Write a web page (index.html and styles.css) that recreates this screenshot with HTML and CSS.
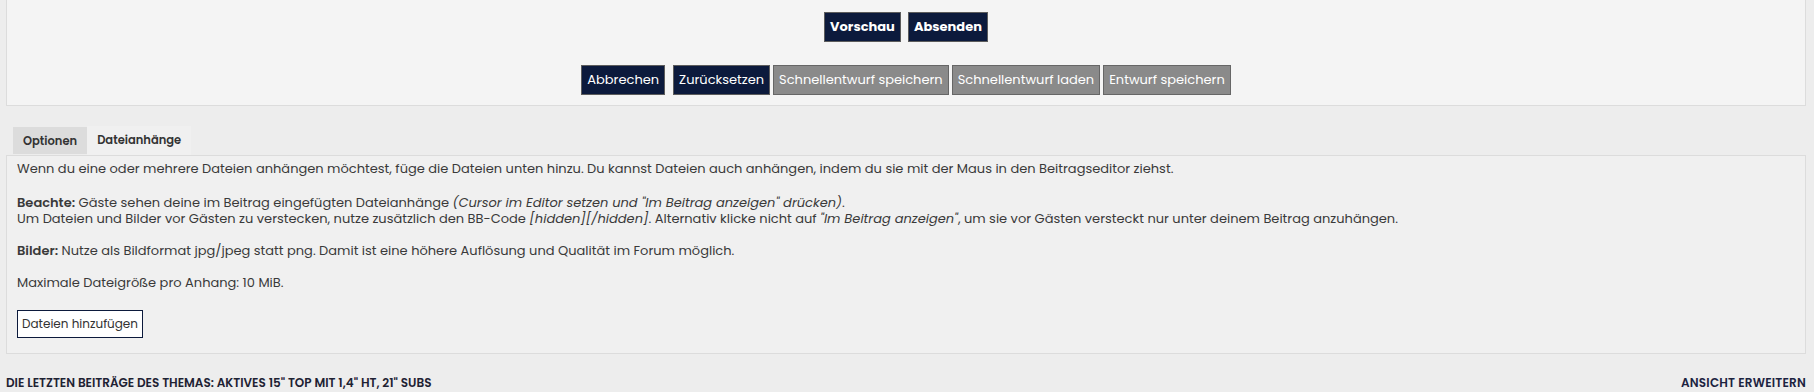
FILE: index.html
```html
<!DOCTYPE html>
<html lang="de">
<head>
    <meta charset="UTF-8">
    <title>Beitrag schreiben</title>
    <link rel="stylesheet" href="styles.css">
</head>
<body>
    <div class="wrap">
        <div class="submit-panel">
            <div class="button-row">
                <button class="btn btn-dark btn-bold">Vorschau</button>
                <button class="btn btn-dark btn-bold">Absenden</button>
            </div>
            <div class="button-row">
                <button class="btn btn-dark spaced">Abbrechen</button>
                <button class="btn btn-dark">Zurücksetzen</button>
                <button class="btn btn-gray">Schnellentwurf speichern</button>
                <button class="btn btn-gray">Schnellentwurf laden</button>
                <button class="btn btn-gray">Entwurf speichern</button>
            </div>
        </div>

        <ul class="tabs">
            <li class="tab">Optionen</li>
            <li class="tab active">Dateianhänge</li>
        </ul>
        <div class="tab-box">
            <p class="intro">Wenn du eine oder mehrere Dateien anhängen möchtest, füge die Dateien unten hinzu. Du kannst Dateien auch anhängen, indem du sie mit der Maus in den Beitragseditor ziehst.</p>
            <p><strong>Beachte:</strong> Gäste sehen deine im Beitrag eingefügten Dateianhänge <em>(Cursor im Editor setzen und "Im Beitrag anzeigen" drücken)</em>.<br>
            Um Dateien und Bilder vor Gästen zu verstecken, nutze zusätzlich den BB-Code <em>[hidden][/hidden]</em>. Alternativ klicke nicht auf <em>"Im Beitrag anzeigen"</em>, um sie vor Gästen versteckt nur unter deinem Beitrag anzuhängen.</p>
            <p><strong>Bilder:</strong> Nutze als Bildformat jpg/jpeg statt png. Damit ist eine höhere Auflösung und Qualität im Forum möglich.</p>
            <p>Maximale Dateigröße pro Anhang: 10 MiB.</p>
            <button class="btn-add">Dateien hinzufügen</button>
        </div>

        <div class="topic-bar">
            <h3>Die letzten Beiträge des Themas: Aktives 15" TOP mit 1,4" HT, 21" Subs</h3>
            <a href="#" class="expand">Ansicht erweitern</a>
        </div>
    </div>
</body>
</html>
```

FILE: styles.css
```css
body {
    margin: 0;
    background: #ededed;
    color: #3a3a3a;
    font-family: Poppins, "Open Sans", sans-serif;
    font-size: 13px;
}

.wrap {
    width: 1800px;
    margin-left: 6px;
}

.submit-panel {
    background: #f4f4f4;
    border: 1px solid #dcdcdc;
    border-top: none;
    padding: 12px 0 10px;
    display: flex;
    flex-direction: column;
    align-items: center;
    gap: 23px;
}

.button-row {
    display: flex;
    gap: 3px;
}

.button-row:first-child {
    gap: 7px;
}

.btn {
    height: 30px;
    padding: 0 5px;
    border: 1px solid #5c5c5c;
    color: #fff;
    font-family: inherit;
    font-size: 13px;
    cursor: pointer;
}

.btn-dark {
    background: #0c1a3c;
}

.btn-gray {
    background: #8a8a8a;
    border-color: #666;
}

.btn-bold {
    font-weight: 700;
}

.spaced {
    margin-right: 5px;
}

.tabs {
    list-style: none;
    margin: 20px 0 0 7px;
    padding: 0;
    display: flex;
    align-items: flex-end;
}

.tab {
    height: 27px;
    line-height: 28px;
    margin-bottom: 1px;
    padding: 0 10px;
    background: #dcdcdc;
    font-size: 11.5px;
    font-weight: 600;
    color: #333;
}

.tab.active {
    background: #f0f0f0;
    height: 29px;
    line-height: 28px;
    margin-bottom: 0;
}

.tab-box {
    background: #f0f0f0;
    border: 1px solid #dcdcdc;
    padding: 5px 10px 15px;
}

.tab-box p {
    margin: 0 0 16px;
    line-height: 16px;
}

.tab-box p.intro {
    margin-bottom: 18px;
}

.tab-box strong {
    font-weight: 600;
}

.btn-add {
    height: 28px;
    margin-top: 3px;
    padding: 0 4px;
    background: #fff;
    border: 1px solid #0c1a3c;
    color: #333;
    font-family: inherit;
    font-size: 12px;
}

.topic-bar {
    display: flex;
    justify-content: space-between;
    align-items: baseline;
    margin-top: 20px;
}

.topic-bar h3 {
    margin: 0;
    font-size: 12px;
    font-weight: 600;
    text-transform: uppercase;
    color: #1e2233;
}

.expand {
    font-size: 12px;
    font-weight: 600;
    text-transform: uppercase;
    color: #1c2340;
    text-decoration: none;
    letter-spacing: 0.2px;
}
```
